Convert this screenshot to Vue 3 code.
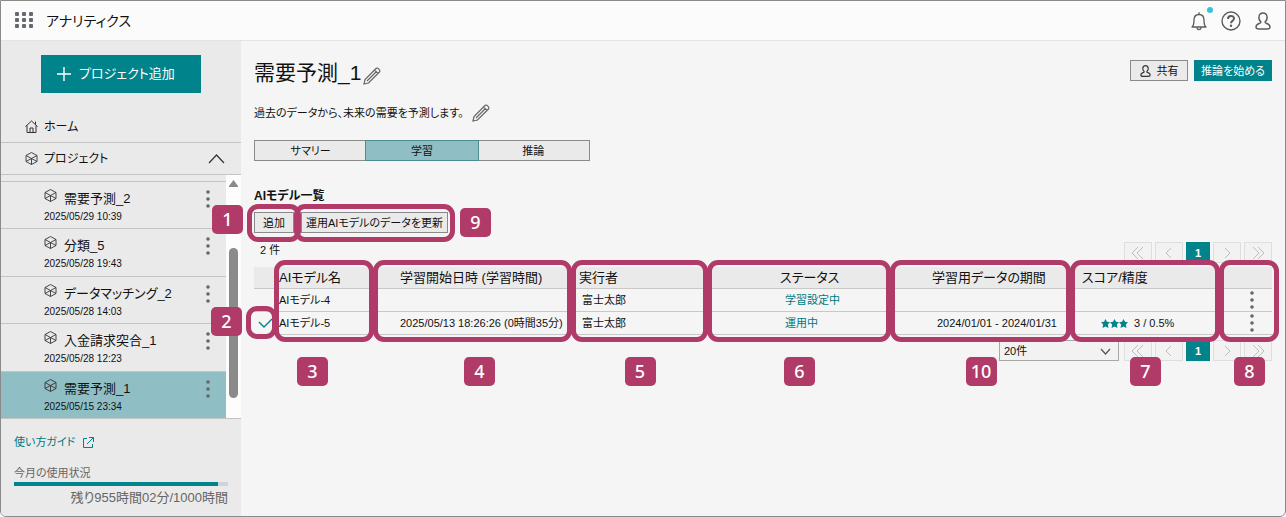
<script setup>
    import { ref } from 'vue';

    const projects = ref([
        { name: '需要予測_2', date: '2025/05/29 10:39' },
        { name: '分類_5', date: '2025/05/28 19:43' },
        { name: 'データマッチング_2', date: '2025/05/28 14:03' },
        { name: '入金請求突合_1', date: '2025/05/28 12:23' },
        { name: '需要予測_1', date: '2025/05/15 23:34' }
    ])
    const selected = ref('需要予測_1')

    const tabs = ['サマリー', '学習', '推論']
    const tab = ref('学習')

    const columns = [
        { key: 'name', label: 'AIモデル名', mark: 3 },
        { key: 'start', label: '学習開始日時 (学習時間)', mark: 4 },
        { key: 'user', label: '実行者', mark: 5 },
        { key: 'status', label: 'ステータス', mark: 6 },
        { key: 'period', label: '学習用データの期間', mark: 10 },
        { key: 'score', label: 'スコア/精度', mark: 7 },
        { key: 'menu', label: '', mark: 8 }
    ]

    const models = ref([
        { name: 'AIモデル-4', start: '', user: '富士太郎', status: '学習設定中', period: '', stars: 0, score: '', active: false },
        { name: 'AIモデル-5', start: '2025/05/13 18:26:26 (0時間35分)', user: '富士太郎', status: '運用中', period: '2024/01/01 - 2024/01/31', stars: 3, score: '3 / 0.5%', active: true }
    ])

    const page_size = ref('20件')
    const total_hours = 1000
    const left_hours = 955

    const arrows = {
        first: 'M8 2L2 8L8 14M13 2L7 8L13 14',
        prev: 'M10 3L5 8L10 13',
        next: 'M6 3L11 8L6 13',
        last: 'M3 2L9 8L3 14M8 2L14 8L8 14'
    }
    const pager = ['first', 'prev', '1', 'next', 'last']
</script>

<template>
<div class="window">
    <header class="topbar">
        <button class="icon-button" aria-label="メニュー">
            <svg width="18" height="17" viewBox="0 0 18 17" fill="#66696e">
                <template v-for="y in 3" :key="y">
                    <rect v-for="x in 3" :key="x" :x="x * 7 - 7" :y="y * 6 - 6" width="4" height="4" rx="1" />
                </template>
            </svg>
        </button>
        <span class="app-name">アナリティクス</span>
        <button class="icon-button bell" aria-label="通知">
            <svg width="16" height="20" viewBox="0 0 16 20" fill="none" stroke="#5c5c5c" stroke-width="1.3">
                <path d="M1 16C3 14.5 3 12.5 3 9C3 5.5 5 3.5 8 3.5C11 3.5 13 5.5 13 9C13 12.5 13 14.5 15 16Z" stroke-linejoin="round" />
                <path d="M8 3.5V1.2M6 16.2C6 19.3 10 19.3 10 16.2" />
            </svg>
            <span class="dot"></span>
        </button>
        <button class="icon-button help" aria-label="ヘルプ">
            <svg width="20" height="20" viewBox="0 0 20 20" fill="none" stroke="#5c5c5c">
                <circle cx="10" cy="10" r="9" stroke-width="1.4" />
                <path d="M7 8C7 4 13 4 13 7.6C13 9.8 10 9.8 10 12.3" stroke-width="2" />
                <circle cx="10" cy="14.8" r="1.2" fill="#5c5c5c" stroke="none" />
            </svg>
        </button>
        <button class="icon-button" aria-label="ユーザー">
            <svg width="16" height="18" viewBox="0 0 16 18" fill="none" stroke="#5c5c5c" stroke-width="1.4">
                <path d="M6 10C2.5 7 3.5 1 8 1C12.5 1 13.5 7 10 10C10 12 15 11 15 15C15 17 13.5 17 12 17H4C2.5 17 1 17 1 15C1 11 6 12 6 10Z" />
            </svg>
        </button>
    </header>

    <div class="body">
        <aside class="sidebar">
            <button class="add-project">
                <svg width="14" height="14" viewBox="0 0 14 14" stroke="#fff" stroke-width="1.4"><path d="M7 0V14M0 7H14" /></svg>
                プロジェクト追加
            </button>
            <a href="#" class="nav home">
                <svg width="13" height="13" viewBox="0 0 13 13" fill="none" stroke="#333"><path d="M.5 6.5L6.5 1L12.5 6.5M2 5.5V12.5H11V5.5M5 12.5V8H8V12.5M10.5 4V1.5" /></svg>
                ホーム
            </a>
            <button class="nav project-toggle">
                <svg width="13" height="13" viewBox="0 0 13 13" fill="none" stroke="#333" stroke-width=".9"><path d="M6.5 .5L12 3.5V9.5L6.5 12.5L1 9.5V3.5ZM1 3.5L6.5 6.5L12 3.5M6.5 6.5V12.5M1 9.5L6.5 6.5L12 9.5" /></svg>
                プロジェクト
                <svg class="chevron" width="17" height="10" viewBox="0 0 17 10" fill="none" stroke="#333" stroke-width="1.2"><path d="M1 9L8.5 1L16 9" /></svg>
            </button>
            <div class="project-pane">
                <ul class="projects">
                    <li v-for="p in projects" :key="p.name" :class="{ selected: p.name == selected }" @click="selected = p.name">
                        <svg class="cube" width="13" height="13" viewBox="0 0 13 13" fill="none" stroke="#333" stroke-width=".9"><path d="M6.5 .5L12 3.5V9.5L6.5 12.5L1 9.5V3.5ZM1 3.5L6.5 6.5L12 3.5M6.5 6.5V12.5M1 9.5L6.5 6.5L12 9.5" /></svg>
                        <span class="project-name">{{p.name}}</span>
                        <span class="project-date">{{p.date}}</span>
                        <button class="kebab" aria-label="操作">
                            <svg width="4" height="18" viewBox="0 0 4 18" fill="#666"><circle cx="2" cy="2" r="1.8" /><circle cx="2" cy="9" r="1.8" /><circle cx="2" cy="16" r="1.8" /></svg>
                        </button>
                    </li>
                </ul>
                <div class="scrollbar">
                    <svg width="9" height="7" viewBox="0 0 9 7" fill="#8a8a8a"><path d="M4.5 0L9 6V7H0V6Z" /></svg>
                    <div class="thumb"></div>
                </div>
            </div>
            <a href="#" class="guide">
                使い方ガイド
                <svg width="11" height="11" viewBox="0 0 11 11" fill="none" stroke="#00838a"><path d="M4 1.5H.5V10.5H9.5V7M6 .5H10.5V5M10.5 .5L4 7" /></svg>
            </a>
            <div class="usage">
                <div class="usage-label">今月の使用状況</div>
                <div class="bar"><div class="bar-fill" :style="{ width: left_hours / total_hours * 100 + '%' }"></div></div>
                <div class="usage-left">残り955時間02分/1000時間</div>
            </div>
        </aside>

        <main>
            <div class="title-row">
                <h1>需要予測_1</h1>
                <button class="icon-button pencil" aria-label="名前を編集">
                    <svg width="18" height="18" viewBox="0 0 18 18" fill="none" stroke="#666" stroke-width="1.2"><path d="M1 17L2 12.5L13 1.5C14.5 0 18 3.5 16.5 5L5.5 16ZM11.5 3L15 6.5M4 14L13.5 4.5" /></svg>
                </button>
                <button class="plain share">
                    <svg width="11" height="12" viewBox="0 0 16 18" fill="none" stroke="#333" stroke-width="1.8"><path d="M6 10C2.5 7 3.5 1 8 1C12.5 1 13.5 7 10 10C10 12 15 11 15 15C15 17 13.5 17 12 17H4C2.5 17 1 17 1 15C1 11 6 12 6 10Z" /></svg>
                    共有
                </button>
                <button class="primary">推論を始める</button>
            </div>
            <div class="description">
                過去のデータから、未来の需要を予測します。
                <button class="icon-button" aria-label="説明を編集">
                    <svg width="18" height="18" viewBox="0 0 18 18" fill="none" stroke="#666" stroke-width="1.2"><path d="M1 17L2 12.5L13 1.5C14.5 0 18 3.5 16.5 5L5.5 16ZM11.5 3L15 6.5M4 14L13.5 4.5" /></svg>
                </button>
            </div>
            <div class="tabs">
                <button v-for="t in tabs" :key="t" :class="{ current: t == tab }" @click="tab = t">{{t}}</button>
            </div>

            <h2>AIモデル一覧</h2>
            <div class="actions">
                <div class="marked">
                    <button class="plain">追加</button>
                    <span class="frame"><span class="mark before">1</span></span>
                </div>
                <div class="marked">
                    <button class="plain">運用AIモデルのデータを更新</button>
                    <span class="frame"><span class="mark after">9</span></span>
                </div>
            </div>

            <div class="list-top">
                <span class="count">2 件</span>
                <nav class="pager">
                    <button v-for="b in pager" :key="b" :class="{ page: b == '1' }" :aria-label="b">
                        <template v-if="b == '1'">1</template>
                        <svg v-else width="16" height="16" viewBox="0 0 16 16" fill="none" stroke="#bdbdbd"><path :d="arrows[b]" /></svg>
                    </button>
                </nav>
            </div>

            <table>
                <colgroup>
                    <col class="w-check">
                    <col v-for="c in columns" :key="c.key" :class="'w-' + c.key">
                </colgroup>
                <thead>
                    <tr>
                        <th></th>
                        <th v-for="c in columns" :key="c.key" :class="c.key">
                            {{c.label}}
                            <span class="frame column"><span class="mark below">{{c.mark}}</span></span>
                        </th>
                    </tr>
                </thead>
                <tbody>
                    <tr v-for="m in models" :key="m.name">
                        <td class="check">
                            <template v-if="m.active">
                                <svg width="15" height="10" viewBox="0 0 15 10" fill="none" stroke="#00838a" stroke-width="1.4"><path d="M1 4L6 9L14 1" /></svg>
                                <span class="frame"><span class="mark before">2</span></span>
                            </template>
                        </td>
                        <td class="name">{{m.name}}</td>
                        <td class="start">{{m.start}}</td>
                        <td class="user">{{m.user}}</td>
                        <td class="status"><a href="#">{{m.status}}</a></td>
                        <td class="period">{{m.period}}</td>
                        <td class="score">
                            <svg v-for="s in m.stars" :key="s" width="9" height="9" viewBox="0 0 10 10" fill="#00838a"><path d="M5 0L6.6 3.1L10 3.6L7.6 6.2L8.3 10L5 8.3L1.7 10L2.4 6.2L0 3.6L3.4 3.1Z" /></svg>
                            <span v-if="m.score" class="score-text">{{m.score}}</span>
                        </td>
                        <td class="menu">
                            <button class="kebab" aria-label="操作">
                                <svg width="4" height="18" viewBox="0 0 4 18" fill="#666"><circle cx="2" cy="2" r="1.8" /><circle cx="2" cy="9" r="1.8" /><circle cx="2" cy="16" r="1.8" /></svg>
                            </button>
                        </td>
                    </tr>
                </tbody>
            </table>

            <div class="list-bottom">
                <div class="size">
                    <select v-model="page_size" aria-label="表示件数">
                        <option>20件</option>
                        <option>50件</option>
                    </select>
                    <svg width="11" height="7" viewBox="0 0 11 7" fill="none" stroke="#555" stroke-width="1.2"><path d="M1 1L5.5 6L10 1" /></svg>
                </div>
                <nav class="pager">
                    <button v-for="b in pager" :key="b" :class="{ page: b == '1' }" :aria-label="b">
                        <template v-if="b == '1'">1</template>
                        <svg v-else width="16" height="16" viewBox="0 0 16 16" fill="none" stroke="#bdbdbd"><path :d="arrows[b]" /></svg>
                    </button>
                </nav>
            </div>
        </main>
    </div>
</div>
</template>

<style>
body
{
    background: #fff;
}
</style>

<style scoped>
.window, .window *
{
    box-sizing: border-box;
}

.window
{
    min-height: 100vh;
    display: flex;
    flex-direction: column;
    border: 1px solid #8a8a8a;
    border-radius: 0 0 6px 6px;
    overflow: hidden;
    background: #f5f5f5;
    color: #111;
    font-family: "Liberation Sans", "Noto Sans CJK JP", sans-serif;
    font-size: 11px;
    line-height: 16px;
    font-feature-settings: "palt";
}

button, select
{
    font: inherit;
    font-feature-settings: inherit;
    color: inherit;
    padding: 0;
    margin: 0;
    cursor: pointer;
}

a
{
    text-decoration: none;
    color: inherit;
}

svg
{
    display: block;
    flex: none;
}

.icon-button, .kebab
{
    background: none;
    border: none;
    display: flex;
    align-items: center;
}

.topbar
{
    display: flex;
    align-items: center;
    height: 40px;
    padding: 0 14px;
    background: #fbfbfb;
    border-bottom: 1px solid #e3e3e6;
}

.app-name
{
    flex: 1;
    margin-left: 13px;
    font-size: 14px;
}

.bell
{
    position: relative;
    margin-right: 14px;
}

.dot
{
    position: absolute;
    top: -4px;
    right: -6px;
    width: 6px;
    height: 6px;
    border-radius: 50%;
    background: #35c4dc;
}

.help
{
    margin-right: 14px;
}

.body
{
    flex: 1;
    display: flex;
}

.sidebar
{
    width: 240px;
    flex: none;
    background: #eaeaea;
}

.add-project
{
    display: flex;
    align-items: center;
    gap: 8px;
    width: 160px;
    height: 38px;
    margin: 14px auto 18px;
    padding-left: 16px;
    border: none;
    background: #00838a;
    color: #fff;
    font-size: 13px;
}

.nav
{
    display: flex;
    align-items: center;
    gap: 6px;
    width: 100%;
    height: 32px;
    padding: 0 16px 0 24px;
    border: none;
    border-bottom: 1px solid #c4c4c4;
    background: none;
    text-align: left;
    font-size: 12px;
}

.chevron
{
    margin-left: auto;
}

.project-pane
{
    display: flex;
    height: 244px;
    border-bottom: 1px solid #c4c4c4;
}

.projects
{
    flex: 1;
    display: grid;
    grid-auto-rows: 1fr;
    margin: 0;
    padding: 6px 0 0;
    list-style: none;
}

.projects li
{
    display: grid;
    grid-template-columns: 20px 1fr 4px;
    grid-template-rows: 20px 16px;
    align-items: center;
    padding: 7px 16px 0 43px;
    border-top: 1px solid #c4c4c4;
    cursor: pointer;
}

.projects li.selected
{
    background: #8fbfc4;
}

.project-name
{
    font-size: 13px;
}

.project-date
{
    grid-row: 2;
    grid-column: 1 / 3;
    font-size: 10px;
}

.cube
{
    align-self: start;
}

.scrollbar
{
    width: 15px;
    padding: 5px 3px 0;
    background: #fdfdfd;
}

.thumb
{
    height: 150px;
    margin-top: 61px;
    border-radius: 5px;
    background: #8a8a8a;
}

.guide
{
    display: flex;
    align-items: center;
    gap: 8px;
    margin: 15px 13px 15px;
    color: #00797f;
}

.usage
{
    padding: 0 13px;
    color: #666;
}

.bar
{
    height: 4px;
    margin: 1px 0 4px;
    background: #cfd4dc;
}

.bar-fill
{
    height: 100%;
    background: #00838a;
}

.usage-left
{
    text-align: right;
    font-size: 13px;
}

main
{
    flex: 1;
    min-width: 0;
    padding: 19px 13px;
}

.title-row
{
    display: flex;
    align-items: flex-start;
    gap: 6px;
}

h1
{
    margin: 0;
    font-size: 21px;
    line-height: 26px;
    font-weight: normal;
}

.pencil
{
    margin: 7px auto 0 -4px;
}

.plain, .primary
{
    display: flex;
    align-items: center;
    justify-content: center;
    min-width: 40px;
    height: 21px;
    padding: 0 4px;
    border: 1px solid #8a8a8a;
    background: #eaeaea;
}

.share
{
    gap: 6px;
    min-width: 58px;
}

.primary
{
    min-width: 78px;
    border-color: #00838a;
    background: #00838a;
    color: #fff;
}

.description
{
    display: flex;
    align-items: center;
    gap: 8px;
    height: 20px;
    margin: 17px 0;
}

.tabs
{
    display: flex;
    width: 336px;
    height: 21px;
    border: 1px solid #8a8a8a;
}

.tabs button
{
    flex: 1;
    border: none;
    background: #eaeaea;
}

.tabs .current
{
    position: relative;
    background: #8fbfc4;
    box-shadow: 0 0 0 1px #4b8c91;
}

h2
{
    margin: 27px 0 8px;
    font-size: 12px;
    line-height: 16px;
    font-weight: bold;
}

.actions
{
    display: flex;
    gap: 7px;
}

.marked
{
    position: relative;
}

.list-top, .list-bottom
{
    display: flex;
}

.list-top
{
    justify-content: space-between;
    margin: 9px 0 4px;
}

.count
{
    padding-left: 6px;
}

.pager
{
    display: flex;
    gap: 3px;
}

.pager button
{
    display: flex;
    align-items: center;
    justify-content: center;
    width: 28px;
    height: 21px;
    border: 1px solid #dedede;
    background: #f2f2f2;
}

.pager .page
{
    width: 24px;
    border-color: #00838a;
    background: #00838a;
    color: #fff;
    font-weight: bold;
}

table
{
    width: 100%;
    table-layout: fixed;
    border-collapse: separate;
    border-spacing: 0;
}

.w-check { width: 21px; }
.w-name { width: 99px; }
.w-start { width: 198px; }
.w-user { width: 136px; }
.w-status { width: 183px; }
.w-period { width: 180px; }
.w-score { width: 149px; }
.w-menu { width: 52px; }

th, td
{
    position: relative;
    height: 23px;
    padding: 0;
    border-bottom: 1px solid #c8c8c8;
    text-align: left;
    white-space: nowrap;
}

th
{
    height: 22px;
    background: #eaeaea;
    font-size: 13px;
    font-weight: normal;
}

td.check, th.name, td.name { padding-left: 4px; }
th.start, td.start { padding-left: 26px; }
th.user { padding-left: 7px; }
td.user { padding-left: 10px; }
th.status { padding-left: 72px; }
td.status { padding-left: 77px; }
th.period { padding-left: 41px; }
td.period { padding-left: 46px; }
th.score { padding-left: 11px; }
td.score { padding-left: 30px; }
td.menu { padding-left: 30px; }

.status a
{
    color: #00797f;
}

.score svg
{
    display: inline-block;
    vertical-align: -1px;
}

.score-text
{
    margin-left: 6px;
}

/* numbered guide frames over the controls */
.frame
{
    position: absolute;
    inset: -8px -7px -9px;
    z-index: 1;
    border: 5px solid #b03a68;
    border-radius: 11px;
    pointer-events: none;
}

.check .frame
{
    inset: -6px -2px -5px -8px;
}

.frame.column
{
    inset: -7px 0 auto -1px;
    height: 82px;
}

.menu .frame.column
{
    right: -7px;
}

.mark
{
    position: absolute;
    width: 31px;
    height: 29px;
    border-radius: 5px;
    background: #b03a68;
    color: #fff;
    font-family: "Noto Sans", sans-serif;
    font-size: 18px;
    font-weight: 500;
    line-height: 28px;
    text-align: center;
}

.mark.before
{
    top: -4px;
    right: calc(100% + 9px);
}

.mark.after
{
    top: -1px;
    left: calc(100% + 10px);
}

.mark.below
{
    top: 92px;
    left: calc(50% - 15px);
}

.name .mark.below
{
    left: 18px;
}

.start .mark.below
{
    left: 86px;
}

.list-bottom
{
    justify-content: flex-end;
    gap: 5px;
    margin-top: 5px;
}

.size
{
    position: relative;
}

.size select
{
    appearance: none;
    display: block;
    width: 120px;
    height: 21px;
    padding: 0 4px;
    border: 1px solid #a8a8a8;
    border-radius: 0;
    background: #f2f2f2;
}

.size svg
{
    position: absolute;
    top: 8px;
    right: 8px;
    pointer-events: none;
}
</style>
